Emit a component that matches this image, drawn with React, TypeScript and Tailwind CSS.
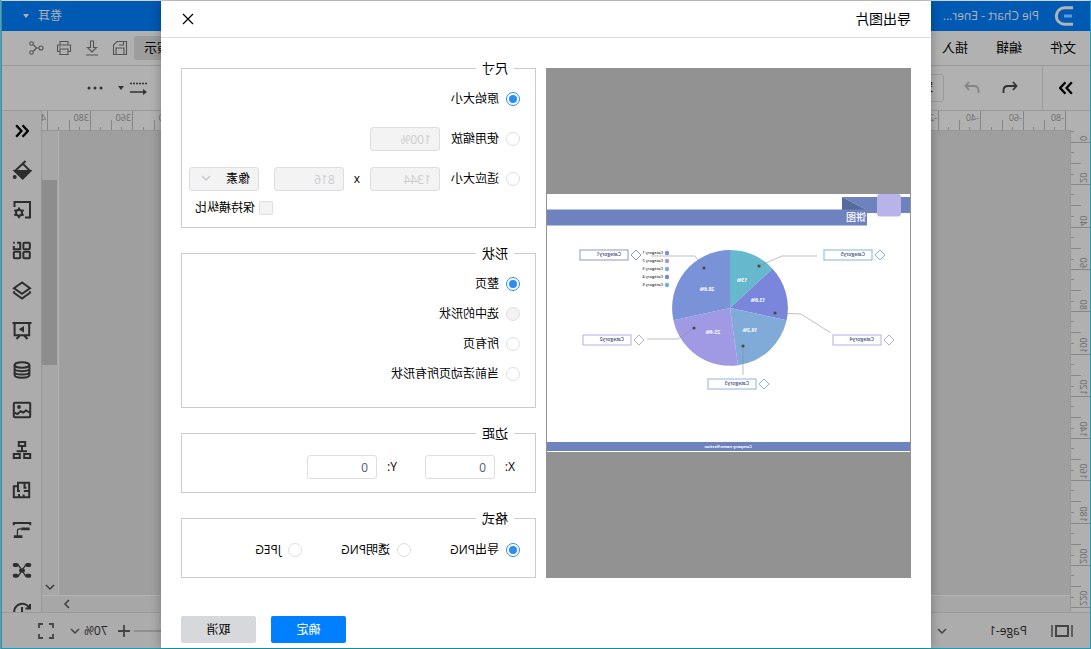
import { useState } from 'react';
import type { ReactNode } from 'react';

const MENUS = ['文件', '编辑', '插入'];

// One ruler unit label every 20 units
const H_TICKS = Array.from({ length: 25 }, (_, i) => ({ pos: 5 + Math.round(i * 42.4), label: String(-80 + i * 20) }));
const V_TICKS = Array.from({ length: 12 }, (_, i) => ({ pos: 12 + Math.round(i * 42.3), label: String(i * 20) }));

const SHAPE_OPTIONS = [
  { id: 'page', label: '整页', disabled: false },
  { id: 'selected', label: '选中的形状', disabled: true },
  { id: 'all', label: '所有页', disabled: false },
  { id: 'active', label: '当前活动页所有形状', disabled: false },
];

const FORMAT_OPTIONS = [
  { id: 'png', label: '导出PNG' },
  { id: 'transparent', label: '透明PNG' },
  { id: 'jpeg', label: 'JPEG' },
];

const SIDE_TOOLS: { name: string; icon: ReactNode }[] = [
  {
    name: '填充',
    icon: (
      <>
        <path d="M6.5 1l2.8 2.8L17 11l-7.7 7.3L1.8 11l7.5-7.4" />
        <path d="M2 11h15l-7.7 7.4z" fill="currentColor" />
        <circle cx="17.3" cy="17" r="2" fill="currentColor" stroke="none" />
      </>
    ),
  },
  {
    name: '页面设置',
    icon: (
      <>
        <path d="M17.5 7V2H2v15.5h5" />
        <circle cx="13" cy="12.8" r="3" />
        <path d="M13 7.5v2M13 16v2.2M8.3 10.2l1.9 1M15.8 14.4l1.9 1M8.3 15.4l1.9-1M15.8 11.2l1.9-1" />
      </>
    ),
  },
  {
    name: '符号库',
    icon: (
      <>
        <rect x="2.2" y="2.8" width="6.4" height="6.4" rx="1" />
        <path d="M15 2.8h-3.2v6.4h6.4V6M17.2 2.8h1.6" />
        <rect x="2.2" y="11.8" width="6.4" height="6.4" rx="1" />
        <rect x="11.8" y="11.8" width="6.4" height="6.4" rx="1" />
      </>
    ),
  },
  { name: '图层', icon: <path d="M10 2.5L18 8.2 10 13.8 2 8.2zM2 11.2v1.5L10 18.6l8-5.9v-1.5" /> },
  {
    name: '演示',
    icon: (
      <>
        <path d="M.5 3h19M2.8 3v12.2h14.6V3M7.8 15.5L4.5 19M12.2 15.5l3.3 3.5" />
        <path d="M8 6l5.2 3.2L8 12.4z" fill="currentColor" stroke="none" />
      </>
    ),
  },
  {
    name: '数据',
    icon: (
      <>
        <ellipse cx="10" cy="5" rx="7.4" ry="2.8" />
        <path d="M2.6 5v10c0 3.6 14.8 3.6 14.8 0V5M2.6 8.6c0 3.4 14.8 3.4 14.8 0M2.6 12c0 3.4 14.8 3.4 14.8 0" />
      </>
    ),
  },
  {
    name: '图片',
    icon: (
      <>
        <rect x="1.8" y="2.8" width="16.4" height="14.4" rx="1" />
        <circle cx="13" cy="7" r="1.9" fill="currentColor" stroke="none" />
        <path d="M2.5 12.5l3.5-2 2.7 2 2.6-1.2 3.2 2.8 3-1.4" />
      </>
    ),
  },
  {
    name: '组织结构',
    icon: (
      <>
        <rect x="6.8" y="2" width="6.4" height="4" />
        <path d="M10 6v4.5M5 11.2h10.4" />
        <rect x="1.8" y="14" width="6" height="4" />
        <rect x="12.2" y="14" width="6" height="4" />
      </>
    ),
  },
  { name: '平面图', icon: <path d="M14 2.8H2.8v14.4h15.4V6.2H14zM14 6v5h-2M7.5 2.8v5h-2M2.8 11h5.4M13 17v-3M8.3 17v-2.5" /> },
  {
    name: '流程',
    icon: (
      <>
        <path d="M1.8 5.2V3h16.4v2.2" />
        <path d="M11 8.8h1.4q2.2 0 2.2 2.4v5" strokeWidth="1.2" />
        <path d="M2.4 8.8h8.4M9.6 16.6h8.6" strokeWidth="2.8" />
      </>
    ),
  },
  {
    name: '思维导图',
    icon: (
      <>
        <path d="M3.5 5h2.8L10 10.4 13.7 5h3M3.5 16h2.8L10 10.4l3.7 5.6h3" strokeWidth="1.3" />
        <path d="M2.7 5h2M15.3 5h2M2.7 15.8h2M15.3 15.8h2M9 10.4h2" strokeWidth="4" strokeLinecap="round" />
      </>
    ),
  },
  { name: '历史', icon: <path d="M2 4v4.5h4.5M2.6 8.2a8 8 0 1 1 0 7M10 7v5l-3.5 2.6" /> },
];

function Icon({ children, className = 'size-5', box = 20, width = 2 }: { children: ReactNode; className?: string; box?: number; width?: number }) {
  return (
    <svg className={className} viewBox={`0 0 ${box} ${box}`} fill="none" stroke="currentColor" strokeWidth={width} aria-hidden="true">
      {children}
    </svg>
  );
}

function Chevron({ className = '' }: { className?: string }) {
  return (
    <Icon box={10} width={1.5} className={`size-2.5 ${className}`}>
      <path d="M1 3l4 4 4-4" />
    </Icon>
  );
}

function Caret({ className = '' }: { className?: string }) {
  return (
    <svg className={`w-1.5 h-1 ${className}`} viewBox="0 0 6 4" fill="currentColor" aria-hidden="true">
      <path d="M0 0h6L3 4z" />
    </svg>
  );
}

function TopRuler() {
  return (
    <svg className="flex-1 min-w-0 h-[19px] text-[9px]" fill="#6b6b6b" aria-hidden="true">
      {H_TICKS.map((t) => (
        <g key={t.label}>
          <rect x={t.pos} y="0" width="1" height="19" fill="#868686" />
          <rect x={t.pos + 11} y="16" width="1" height="3" fill="#868686" />
          <rect x={t.pos + 21} y="9" width="1" height="10" fill="#868686" />
          <rect x={t.pos + 32} y="16" width="1" height="3" fill="#868686" />
          <text x={t.pos + 2} y="10">{t.label}</text>
        </g>
      ))}
    </svg>
  );
}

function SideRuler() {
  return (
    <svg className="w-[19px] h-full shrink-0 bg-[#b0b0b0] text-[9px]" fill="#6b6b6b" aria-hidden="true">
      <rect x="16" y="1" width="3" height="1" fill="#868686" />
      {V_TICKS.map((t) => (
        <g key={t.label}>
          <rect x="0" y={t.pos} width="19" height="1" fill="#868686" />
          <rect x="16" y={t.pos + 10} width="3" height="1" fill="#868686" />
          <rect x="9" y={t.pos + 21} width="10" height="1" fill="#868686" />
          <rect x="16" y={t.pos + 32} width="3" height="1" fill="#868686" />
          <text transform={`translate(10 ${t.pos - 1}) rotate(-90)`}>{t.label}</text>
        </g>
      ))}
    </svg>
  );
}

const CALLOUTS = [
  { x: 38, y: 56, color: '#7db5e0', text: 'Category5' },
  { x: 282, y: 56, color: '#8c98d0', text: 'Category1' },
  { x: 29, y: 141, color: '#b3aee6', text: 'Category4' },
  { x: 279, y: 141, color: '#b3aee6', text: 'Category2' },
  { x: 154, y: 185, color: '#8fb3dc', text: 'Category3' },
];

const SLICES = [
  { d: 'M180 114V56A58 58 0 0 0 137.5 74.7Z', fill: '#66b9cc', label: '13%', lx: 168, ly: 88 },
  { d: 'M180 114L137.5 74.7A58 58 0 0 0 123.4 126.2Z', fill: '#7a86dc', label: '13.6%', lx: 152, ly: 108 },
  { d: 'M180 114L123.4 126.2A58 58 0 0 0 172 171.3Z', fill: '#80aad8', label: '19.2%', lx: 160, ly: 138 },
  { d: 'M180 114L172 171.3A58 58 0 0 0 236.6 126.2Z', fill: '#a099e4', label: '23.4%', lx: 197, ly: 140 },
  { d: 'M180 114L236.6 126.2A58 58 0 0 0 180 56Z', fill: '#7a93d8', label: '28.6%', lx: 203, ly: 97 },
];

const LEADERS = ['151,72 128,62 93,62', '206,74 215,62 259,62', '135,119 109,120 79,139', '216,134 232,145 263,145', '167,152 167,181'];

const LEGEND_COLORS = ['#7a93d8', '#a099e4', '#80aad8', '#7a86dc', '#66b9cc'];

function PagePreview() {
  return (
    <svg className="block w-full bg-white" viewBox="0 0 363 258" role="img" aria-label="饼图">
      <path d="M0 3h68l-25 13v3H0z" fill="#6d82be" />
      <path d="M68 3v13H43z" fill="#586a9b" />
      <rect x="43" y="15.5" width="320" height="16" fill="#6d82be" />
      <rect x="9" y="0" width="24" height="22.5" rx="3" fill="#b8b4ea" />
      <text x="44" y="27" fontSize="10" fontWeight="500" fill="#fff">饼图</text>

      {SLICES.map((s) => (
        <path key={s.fill} d={s.d} fill={s.fill} />
      ))}
      <g fontSize="5" fontWeight="700" fill="#fff" textAnchor="middle">
        {SLICES.map((s) => (
          <text key={s.fill} x={s.lx} y={s.ly}>{s.label}</text>
        ))}
      </g>

      {LEADERS.map((points) => {
        const [cx, cy] = points.split(' ')[0].split(',');
        return (
          <g key={points}>
            <polyline points={points} fill="none" stroke="#8a8a8a" strokeOpacity="0.55" />
            <circle cx={cx} cy={cy} r="1.6" fill="#484848" />
          </g>
        );
      })}

      {CALLOUTS.map((c) => (
        <g key={c.text}>
          <rect x={c.x} y={c.y} width="48" height="10" fill="#fff" stroke={c.color} />
          <path d={`M${c.x - 8} ${c.y}l5 5-5 5-5-5z`} fill="#fff" stroke={c.color} />
          <text x={c.x + 7} y={c.y + 6} fontSize="5" fontWeight="600" fill="#3f4a78">{c.text}</text>
        </g>
      ))}

      {LEGEND_COLORS.map((color, i) => (
        <g key={color}>
          <circle cx="243" cy={59 + i * 8} r="2.2" fill={color} />
          <text x="247" y={60 + i * 8} fontSize="4" fontWeight="600" fill="#333">Category {i + 1}</text>
        </g>
      ))}

      <rect x="0" y="248" width="363" height="9" fill="#6d82be" />
      <text x="182" y="254" fontSize="4" fontWeight="700" fill="#fff" textAnchor="middle">Company name/Section</text>
    </svg>
  );
}

function Group({ title, className, children }: { title: string; className: string; children: ReactNode }) {
  return (
    <fieldset className="border border-[#cccccc] min-w-0">
      <legend className="ml-[21px] px-1.5 text-[13px] leading-5">{title}</legend>
      <div className={className}>{children}</div>
    </fieldset>
  );
}

type RadioProps = { name: string; label: string; checked: boolean; disabled?: boolean; onChange: () => void };

function Radio({ name, label, checked, disabled, onChange }: RadioProps) {
  return (
    <label className="flex items-center gap-[7px]">
      <input
        type="radio"
        name={name}
        checked={checked}
        disabled={disabled}
        onChange={onChange}
        className="appearance-none size-3.5 shrink-0 rounded-full border border-[#dcdee2] bg-white p-0.5 checked:border-[#2d8cf0] checked:bg-[#2d8cf0] checked:bg-clip-content disabled:bg-[#f3f3f3]"
      />
      <span>{label}</span>
    </label>
  );
}

const FIELD = 'w-[70px] h-6 rounded-[3px] border border-[#dcdee2] px-2 text-[#515a6e] bg-white disabled:bg-[#f3f3f3] disabled:text-[#cccccc]';

function ExportDialog() {
  const [size, setSize] = useState('original');
  const [shape, setShape] = useState('page');
  const [format, setFormat] = useState('png');
  const [x, setX] = useState('0');
  const [y, setY] = useState('0');

  return (
    <div role="dialog" aria-labelledby="export-title" className="w-[770px] max-w-full h-full flex flex-col bg-white text-black text-xs shadow-[0_0_10px_rgba(0,0,0,0.3)]">
      <header className="h-[37px] shrink-0 flex items-center justify-between pl-5 pr-[21px] border-b border-[#dddddd]">
        <h2 id="export-title" className="text-sm leading-5">导出图片</h2>
        <button type="button" aria-label="关闭">
          <Icon box={12} width={1.2} className="size-3">
            <path d="M1 1l10 10M11 1L1 11" />
          </Icon>
        </button>
      </header>

      <div className="flex gap-2.5 px-5 pt-5">
        <div className="flex-1 mt-2.5 px-px flex items-center bg-[#929292]">
          <PagePreview />
        </div>

        <form className="w-[355px] shrink-0 flex flex-col gap-[15px]">
          <Group title="尺寸" className="pt-px pb-2.5 pl-[15px] pr-[7px]">
            <div className="h-10 flex items-center">
              <Radio name="size" label="原始大小" checked={size === 'original'} onChange={() => setSize('original')} />
            </div>
            <div className="h-10 flex items-center gap-[11px]">
              <Radio name="size" label="使用缩放" checked={size === 'zoom'} onChange={() => setSize('zoom')} />
              <input aria-label="缩放" className={FIELD} defaultValue="100%" disabled={size !== 'zoom'} />
            </div>
            <div className="h-10 flex items-center gap-[11px]">
              <Radio name="size" label="适应大小" checked={size === 'fit'} onChange={() => setSize('fit')} />
              <input aria-label="宽度" className={FIELD} defaultValue="1344" disabled={size !== 'fit'} />
              <span className="-mx-px">x</span>
              <input aria-label="高度" className={FIELD} defaultValue="816" disabled={size !== 'fit'} />
              <div className="relative ml-auto">
                <select aria-label="单位" disabled={size !== 'fit'} className="appearance-none w-[70px] h-6 rounded-[3px] border border-[#dcdee2] bg-[#f3f3f3] px-2 text-black opacity-100">
                  <option>像素</option>
                </select>
                <Chevron className="absolute right-3 top-1.5 text-[#c5c8ce] pointer-events-none" />
              </div>
            </div>
            <label className="h-[18px] flex items-center justify-end gap-1 pr-1.5">
              <input type="checkbox" disabled className="appearance-none size-3.5 rounded-xs border border-[#dcdee2] bg-[#f3f3f3]" />
              <span>保持横纵比</span>
            </label>
          </Group>

          <Group title="形状" className="pt-1.5 pb-[18px] pl-[15px]">
            {SHAPE_OPTIONS.map((o) => (
              <div key={o.id} className="h-[30px] flex items-center">
                <Radio name="shape" label={o.label} disabled={o.disabled} checked={shape === o.id} onChange={() => setShape(o.id)} />
              </div>
            ))}
          </Group>

          <Group title="边距" className="pt-3 pb-[13px] pl-5">
            <div className="flex items-center gap-7">
              <label className="flex items-center gap-2.5">
                <span className="w-2.5">X:</span>
                <input className={FIELD} value={x} onChange={(e) => setX(e.target.value)} />
              </label>
              <label className="flex items-center gap-2.5">
                <span className="w-2.5">Y:</span>
                <input className={FIELD} value={y} onChange={(e) => setY(e.target.value)} />
              </label>
            </div>
          </Group>

          <Group title="格式" className="pt-2.5 pb-[15px] pl-[15px]">
            <div className="h-6 flex items-center">
              {FORMAT_OPTIONS.map((o) => (
                <div key={o.id} className="w-[109px]">
                  <Radio name="format" label={o.label} checked={format === o.id} onChange={() => setFormat(o.id)} />
                </div>
              ))}
            </div>
          </Group>
        </form>
      </div>

      <footer className="flex justify-end gap-[15px] px-5 pt-[38px]">
        <button type="button" className="w-[75px] h-[27px] rounded-xs bg-[#007fff] text-white">确定</button>
        <button type="button" className="w-[75px] h-[27px] rounded-xs bg-[#d7d8dc] text-black">取消</button>
      </footer>
    </div>
  );
}

function TitleBar() {
  return (
    <div className="h-[30px] shrink-0 flex items-center pl-4 pr-[21px] bg-[#0059b3] text-[#b3b3b3] text-xs">
      <svg className="size-5" viewBox="0 0 20 20" fill="none" stroke="currentColor" strokeWidth="3" aria-hidden="true">
        <path d="M1 1.8h8.5a8.2 8.2 0 0 1 0 16.4H1" />
        <path d="M2 10h8" stroke="#5f9ad6" />
      </svg>
      <span className="ml-[15px]">Pie Chart - Ener...</span>
      <button type="button" className="ml-auto flex items-center gap-[9px]">
        卷耳
        <Caret />
      </button>
    </div>
  );
}

function MenuBar() {
  return (
    <div className="h-[35px] shrink-0 flex items-center justify-between pl-3.5 pr-[26px] border-b border-[#999999] text-[#555555]">
      <nav className="flex gap-7 text-[13px] text-black">
        {MENUS.map((m) => (
          <button key={m} type="button">{m}</button>
        ))}
      </nav>
      <div className="flex items-center gap-3">
        <button type="button" className="w-[58px] h-6 -mr-1.5 pr-2.5 rounded-[3px] bg-[#9d9d9d] text-right text-[13px] text-black">演示</button>
        <button type="button" aria-label="保存">
          <Icon box={16} width={1.1} className="size-4">
            <path d="M1.5 1.5H11L14.5 5v9.5h-13zM4 14.5V8h8v6.5M4.5 1.5V5H9" />
          </Icon>
        </button>
        <button type="button" aria-label="下载">
          <Icon box={16} width={1.1} className="size-4">
            <path d="M6.5 1h3v6.5h3L8 12 3.5 7.5h3zM2 15h12" />
          </Icon>
        </button>
        <button type="button" aria-label="打印">
          <Icon box={16} width={1.1} className="size-4">
            <path d="M4 5V1.5h8V5M4 11.5H1.5V5h13v6.500H12M4 9h8v5.5H4zM11.5 7H13" />
          </Icon>
        </button>
        <button type="button" aria-label="分享">
          <Icon box={16} width={1.1} className="size-4">
            <circle cx="3" cy="8" r="2" />
            <circle cx="12.5" cy="3.5" r="1.8" />
            <circle cx="12.5" cy="12.5" r="1.8" />
            <path d="M5 8h2.5L11 4.5M7.5 8l3.5 3.5" />
          </Icon>
        </button>
      </div>
    </div>
  );
}

function ToolBar() {
  return (
    <div className="h-[45px] shrink-0 flex items-center border-b border-[#999999] text-[#333333]">
      <button type="button" aria-label="收起面板" className="w-12 h-full flex items-center justify-center border-r border-[#999999] text-black">
        <Icon box={12} className="size-3.5">
          <path d="M1 1l4.5 5L1 11M6.5 1L11 6l-4.5 5" />
        </Icon>
      </button>
      <button type="button" aria-label="撤销" className="ml-6">
        <Icon box={16} width={1.8} className="size-4">
          <path d="M5 2L1.5 6 5 10M1.5 6H10q4.5 0 4.5 4.5V13" />
        </Icon>
      </button>
      <button type="button" aria-label="重做" className="ml-[22px] text-[#858585]">
        <Icon box={16} width={1.8} className="size-4">
          <path d="M11 2l3.5 4-3.5 4M14.5 6H6q-4.5 0-4.5 4.5V13" />
        </Icon>
      </button>
      <select aria-label="字体" className="appearance-none ml-5 w-28 h-7 rounded-[3px] border border-[#9b9b9b] px-2.5 text-xs text-black">
        <option>宋体</option>
      </select>
      <button type="button" aria-label="连接线" className="ml-auto flex items-center gap-1.5">
        <Icon box={18} width={1.5} className="size-[18px]">
          <path d="M1 4.5h17" strokeDasharray="2 1" />
          <path d="M3 13h15" />
          <path d="M1 13l4-3v6z" fill="currentColor" stroke="none" />
        </Icon>
        <Caret />
      </button>
      <button type="button" aria-label="更多" className="ml-[15px] mr-[85px]">
        <svg className="w-4 h-1" viewBox="0 0 16 4" fill="currentColor" aria-hidden="true">
          <circle cx="2" cy="2" r="1.5" />
          <circle cx="8" cy="2" r="1.5" />
          <circle cx="14" cy="2" r="1.5" />
        </svg>
      </button>
    </div>
  );
}

function Workspace() {
  return (
    <div className="flex-1 min-h-0 flex">
      <div className="flex-1 min-w-0 flex flex-col">
        <div className="h-[19px] shrink-0 flex">
          <div className="w-[19px] shrink-0" />
          <TopRuler />
        </div>
        <div className="flex-1 min-h-0 flex">
          <SideRuler />
          <div className="flex-1 min-w-0 flex flex-col border-l border-t border-[#979797]">
            <div className="flex-1 min-h-0 flex">
              <div className="flex-1 bg-[#9f9f9f]" />
              <div className="w-[17px] flex flex-col items-center pt-[49px] pb-[3px] border-l border-[#b3b3b3] bg-[#a7a7a7] text-[#3c3c3c]">
                <div className="w-[15px] h-[185px] bg-[#8d8d8d]" />
                <Chevron className="mt-auto" />
              </div>
            </div>
            <div className="h-[17px] shrink-0 flex items-center justify-end pr-5 border-t border-[#b3b3b3] bg-[#a7a7a7] text-[#3c3c3c]">
              <Chevron className="-rotate-90" />
            </div>
          </div>
        </div>
      </div>

      <aside className="w-10 shrink-0 flex flex-col items-center pr-0.5 overflow-hidden border-l border-[#979797] bg-[#acacac] text-[#2d2d2d]">
        <button type="button" aria-label="展开" className="h-[39px] shrink-0 text-black">
          <Icon box={12} className="size-3.5">
            <path d="M5.5 1L1 6l4.5 5M11 1L6.500 6l4.5 5" />
          </Icon>
        </button>
        {SIDE_TOOLS.map((t) => (
          <button key={t.name} type="button" aria-label={t.name} className="h-10 shrink-0">
            <Icon>{t.icon}</Icon>
          </button>
        ))}
      </aside>
    </div>
  );
}

function StatusBar() {
  return (
    <div className="h-9 shrink-0 flex items-center pl-[17px] pr-9 border-t border-[#999999] bg-[#acacac] text-[#444444] text-xs">
      <svg className="w-[22px] h-3" viewBox="0 0 22 12" fill="none" stroke="currentColor" strokeWidth="2" aria-hidden="true">
        <path d="M1 0v12M21 0v12" strokeWidth="1.5" />
        <rect x="5" y="1" width="12" height="10" />
      </svg>
      <span className="ml-6 text-[#222222]">Page-1</span>
      <Chevron className="ml-[42px]" />
      <div className="ml-auto flex items-center">
        <div className="w-32 h-0.5 bg-[#8f8f8f]" />
        <button type="button" aria-label="放大" className="ml-1">
          <Icon box={12} width={1.8} className="size-3">
            <path d="M6 0v12M0 6h12" />
          </Icon>
        </button>
        <button type="button" className="ml-2.5 flex items-center gap-1">
          <span className="text-[#222222]">70%</span>
          <Chevron />
        </button>
        <button type="button" aria-label="全屏" className="ml-4">
          <Icon box={16} width={1.8} className="size-4">
            <path d="M1 5V1h4M11 1h4v4M15 11v4h-4M5 15H1v-4" />
          </Icon>
        </button>
      </div>
    </div>
  );
}

export default function App() {
  return (
    <div className="h-screen overflow-hidden -scale-x-100 pr-px bg-[#7f8f9a] font-['Open_Sans','Noto_Sans_CJK_SC',sans-serif]">
      <div className="relative h-full flex flex-col border border-[#14a0bd] border-t-[#d4d4d4] bg-[#b1b1b1]">
        <TitleBar />
        <MenuBar />
        <ToolBar />
        <Workspace />
        <StatusBar />
        {/* Modal layer */}
        <div className="absolute inset-0 flex justify-center">
          <ExportDialog />
        </div>
      </div>
    </div>
  );
}
